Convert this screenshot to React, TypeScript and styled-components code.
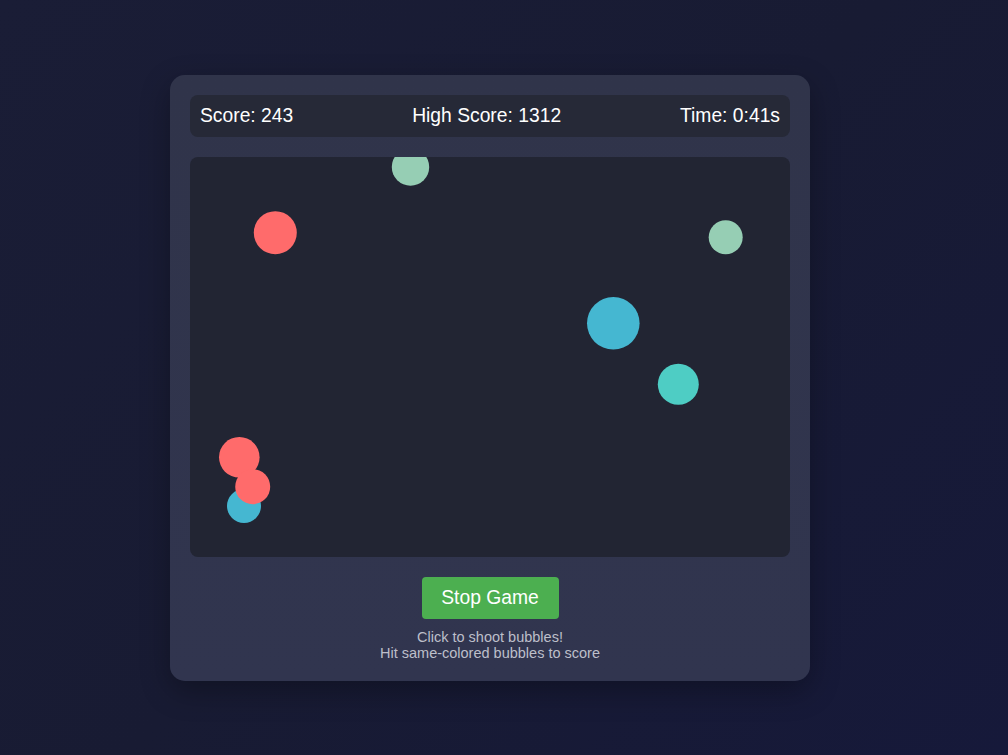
import React from "react";
import styled, { createGlobalStyle } from "styled-components";

interface Bubble {
  x: number;
  y: number;
  r: number;
  color: string;
}

const bubbles: Bubble[] = [
  { x: 220.5, y: 10, r: 18.7, color: "#96ceb4" },
  { x: 85.3, y: 75.7, r: 21.5, color: "#ff6b6b" },
  { x: 535.7, y: 80.3, r: 17, color: "#96ceb4" },
  { x: 423.3, y: 166.3, r: 26.3, color: "#45b7d1" },
  { x: 488.3, y: 227.3, r: 20.5, color: "#4ecdc4" },
  { x: 54, y: 349, r: 17, color: "#45b7d1" },
  { x: 49.3, y: 300.3, r: 20.3, color: "#ff6b6b" },
  { x: 62.7, y: 329.7, r: 17.5, color: "#ff6b6b" },
];

const App: React.FC = () => {
  return (
    <>
      <GlobalStyle />
      <Page>
        <GameCard>
          <ScoreBar>
            <Stat>Score: 243</Stat>
            <Stat>High Score: 1312</Stat>
            <Stat>Time: 0:41s</Stat>
          </ScoreBar>
          <Board viewBox="0 0 600 400">
            {bubbles.map((b, i) => (
              <circle key={i} cx={b.x} cy={b.y} r={b.r} fill={b.color} />
            ))}
          </Board>
          <Controls>
            <StopButton>Stop Game</StopButton>
            <Hint>
              Click to shoot bubbles!
              <br />
              Hit same-colored bubbles to score
            </Hint>
          </Controls>
        </GameCard>
      </Page>
    </>
  );
};

export default App;

const GlobalStyle = createGlobalStyle`
  html, body {
    margin: 0;
    padding: 0;
  }
  body {
    font-family: "Liberation Sans", Arial, sans-serif;
    background: linear-gradient(135deg, #1a1d36 0%, #181b33 50%, #16193a 100%);
    min-height: 755px;
  }
`;

const Page = styled.div`
  min-height: 755px;
  display: flex;
  align-items: center;
  justify-content: center;
  padding-right: 28px;
  box-sizing: border-box;
`;

const GameCard = styled.div`
  width: 640px;
  box-sizing: border-box;
  padding: 20px;
  border-radius: 15px;
  background: linear-gradient(180deg, #30344a 0%, #31354f 100%);
  box-shadow: 0 10px 30px rgba(0, 0, 0, 0.3);
  display: flex;
  flex-direction: column;
  gap: 20px;
`;

const ScoreBar = styled.div`
  height: 42px;
  box-sizing: border-box;
  padding: 0 10px;
  display: flex;
  align-items: center;
  justify-content: space-between;
  background: #262937;
  border-radius: 8px;
`;

const Stat = styled.span`
  color: #ffffff;
  font-size: 19.3px;
`;

const Board = styled.svg`
  display: block;
  width: 600px;
  height: 400px;
  background: #222533;
  border-radius: 8px;
`;

const Controls = styled.div`
  display: flex;
  flex-direction: column;
  align-items: center;
  gap: 10px;
`;

const StopButton = styled.button`
  width: 137px;
  height: 42px;
  border: none;
  border-radius: 4px;
  background: #4caf50;
  color: #ffffff;
  font-family: "Liberation Sans", Arial, sans-serif;
  font-size: 19.3px;
  cursor: pointer;
`;

const Hint = styled.div`
  color: #bdbfca;
  font-size: 14.5px;
  line-height: 16px;
  text-align: center;
`;
